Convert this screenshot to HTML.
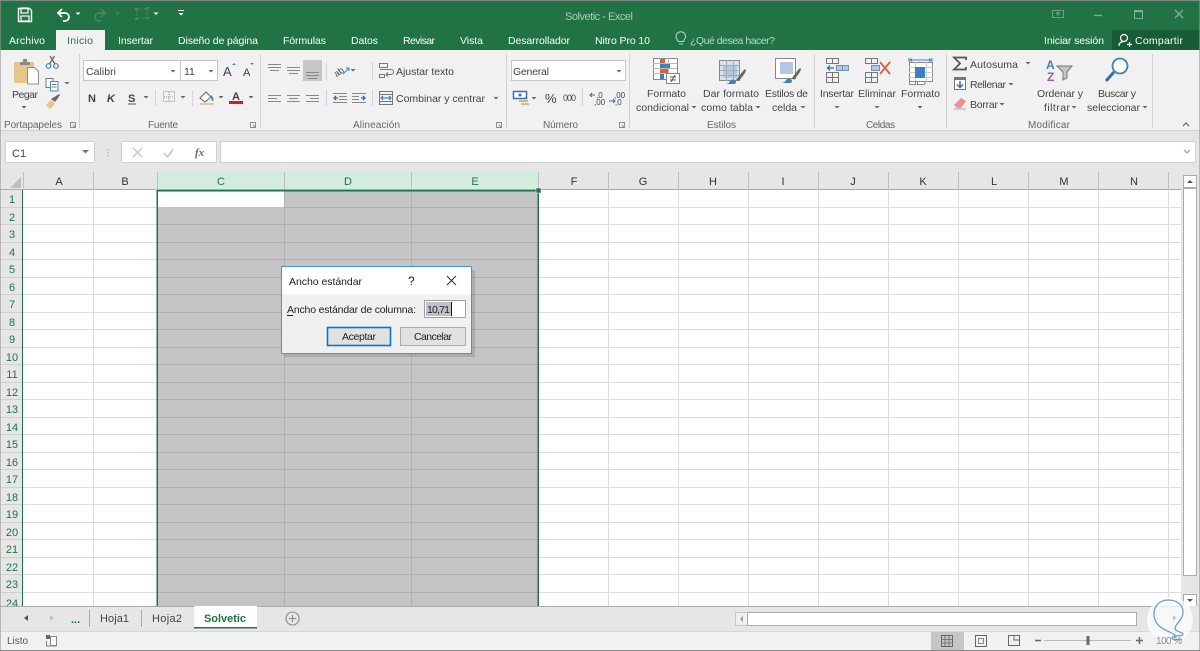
<!DOCTYPE html>
<html lang="es"><head><meta charset="utf-8"><title>Solvetic - Excel</title>
<style>
html,body{margin:0;padding:0;background:#e6e6e6;width:1200px;height:651px;overflow:hidden}
svg{display:block;filter:blur(.35px)}
text{font-family:"Liberation Sans",sans-serif;font-size:10.5px;fill:#444}
.t{fill:#fff;font-size:10.5px}
.g{fill:#666;font-size:10px}
.c{fill:#333;font-size:11px;text-anchor:middle}
.r{fill:#217346;font-size:11px;text-anchor:middle}
.ln{fill:none;stroke:#666;stroke-width:1}
</style></head><body>
<svg width="1200" height="651" viewBox="0 0 1200 651" xmlns="http://www.w3.org/2000/svg">
<defs>
<path id="ar" d="M-2.5 0h5l-2.5 2.5z" fill="#666"/>
<path id="aw" d="M-2.5 0h5l-2.5 2.5z" fill="#fff"/>
</defs>
<rect width="1200" height="651" fill="#e6e6e6"/>
<!-- title bar -->
<rect width="1200" height="50" fill="#217346"/>
<rect width="1200" height="1" fill="#7f8a84"/>
<path d="M18.5 8.5h11l2 2v11h-13z" fill="none" stroke="#fff" stroke-width="1.4"/><rect x="21" y="8" width="7" height="5" fill="none" stroke="#fff" stroke-width="1.2"/><rect x="21" y="16" width="8" height="5" fill="none" stroke="#fff" stroke-width="1.2"/>
<path d="M62 9l-4 4 4 4M58 13h7a4 4 0 0 1 0 8h-2" fill="none" stroke="#fff" stroke-width="1.7"/><use href="#aw" x="78" y="12.5"/>
<path d="M101 9l4 4-4 4M105 13h-6a4 4 0 0 0 0 8h2" fill="none" stroke="#46885f" stroke-width="1.7"/><path d="M115 12.5h5l-2.500 2.500z" fill="#46885f"/>
<rect x="137" y="9" width="10" height="9" fill="none" stroke="#46885f" stroke-width="1.2" stroke-dasharray="2 1.500"/><path d="M135 9h3M146 18h3M135 19h3M146 8h3" stroke="#46885f" stroke-width="2"/><use href="#aw" x="156" y="12.500"/>
<path d="M178 10.500h6" stroke="#fff"/><use href="#aw" x="181" y="13"/>
<text x="565" y="20" textLength="68" style="fill:#a8cbb8;font-size:11px">Solvetic - Excel</text>
<rect x="1052.500" y="10.500" width="11" height="7" fill="none" stroke="#6d9f85"/><path d="M1058 16v-4m-2 2l2-2 2 2" stroke="#6d9f85" fill="none"/>
<path d="M1094 15.500h8" stroke="#7fae96" stroke-width="1.300"/>
<rect x="1134.500" y="10.500" width="8" height="8" fill="none" stroke="#7fae96"/><path d="M1134 11.500h9" stroke="#7fae96" stroke-width="1.500"/>
<path d="M1175 10l8 8m0-8l-8 8" stroke="#7fae96" stroke-width="1.300"/>
<!-- tabs -->
<rect x="56" y="30" width="49" height="21" fill="#f1f1f1"/>
<text class="t" x="9" y="44" textLength="36">Archivo</text>
<text x="67" y="44" textLength="26" style="fill:#217346">Inicio</text>
<text class="t" x="118" y="44" textLength="35">Insertar</text>
<text class="t" x="178" y="44" textLength="80">Diseño de página</text>
<text class="t" x="283" y="44" textLength="43">Fórmulas</text>
<text class="t" x="351" y="44" textLength="27">Datos</text>
<text class="t" x="403" y="44" textLength="32">Revisar</text>
<text class="t" x="460" y="44" textLength="23">Vista</text>
<text class="t" x="508" y="44" textLength="62">Desarrollador</text>
<text class="t" x="595" y="44" textLength="55">Nitro Pro 10</text>
<path d="M679 44h4M678 41.500c0-2-2-2.500-2-5a4.800 4.800 0 0 1 9.600 0c0 2.500-2 3-2 5z" fill="none" stroke="#bcd6c8"/>
<text x="690" y="44" textLength="85" style="fill:#bcd6c8">¿Qué desea hacer?</text>
<text class="t" x="1044" y="44" textLength="60">Iniciar sesión</text>
<rect x="1112" y="30" width="88" height="20" fill="#185c37"/>
<circle cx="1124" cy="38" r="3.500" fill="none" stroke="#fff" stroke-width="1.200"/><path d="M1119 46c0-3 2-4.500 5-4.500M1127 44.500h5m-2.500-2.500v5" fill="none" stroke="#fff" stroke-width="1.200"/>
<text class="t" x="1135" y="44" textLength="48">Compartir</text>
<!-- ribbon -->
<rect y="50" width="1200" height="80" fill="#f1f1f1"/>
<rect y="130" width="1200" height="1" fill="#d2d2d2"/>
<path d="M79.500 54v74M260.500 54v74M506.500 54v74M629.500 54v74M814.500 54v74M946.500 54v74M1152.500 54v74" stroke="#d2d2d2"/>
<!-- portapapeles -->
<rect x="14" y="62" width="20" height="21" rx="1" fill="#e8c588"/><path d="M20 62h10v3H20zM23 59h4v3h-4z" fill="#8a8a8a"/>
<path d="M27.500 67.500h7l4 4v12.500h-11z" fill="#fff" stroke="#8f8f8f"/>
<text x="12" y="98" textLength="26">Pegar</text><use href="#ar" x="24" y="106"/>
<circle cx="48.500" cy="66" r="2.300" fill="none" stroke="#3f7fc0" stroke-width="1.200"/><circle cx="56" cy="66" r="2.300" fill="none" stroke="#3f7fc0" stroke-width="1.200"/><path d="M49.500 64l5-8M55 64l-5-8" stroke="#666" stroke-width="1.300"/>
<rect x="46" y="78.500" width="7" height="9" fill="#fff" stroke="#777"/><rect x="50.500" y="81.500" width="7.500" height="9.500" fill="#fff" stroke="#4a87c5"/><path d="M52 84.500h4.500M52 87h4.500" stroke="#777"/><use href="#ar" x="67" y="82"/>
<path d="M46 105l5-5 4 4-5 5z" fill="#e9c47c"/><path d="M51 99l5-3 3-2 1 1-2 3-3 4z" fill="#666"/>
<text class="g" x="4" y="128" textLength="58">Portapapeles</text>
<path d="M70.500 122.500h5v5h-5zM73 125l2.500 2.500" fill="none" stroke="#888" stroke-width=".9"/>
<!-- fuente -->
<rect x="83.500" y="60.500" width="97" height="20" fill="#fff" stroke="#c6c6c6"/><rect x="180.500" y="60.500" width="37" height="20" fill="#fff" stroke="#c6c6c6"/>
<text x="86" y="75" textLength="30">Calibri</text><use href="#ar" x="173" y="70"/>
<text x="184" y="75">11</text><use href="#ar" x="211" y="70"/>
<text x="223" y="76" textLength="9" style="font-size:13px">A</text><path d="M232 65l2-2 2 2z" fill="#3f7fc0"/>
<text x="243" y="76" textLength="8" style="font-size:11px">A</text><path d="M250 63h4l-2 2z" fill="#3f7fc0"/>
<text x="88" y="102" style="font-weight:bold;font-size:11px">N</text><text x="107" y="102" style="font-weight:bold;font-style:italic;font-size:11px">K</text><text x="128" y="102" style="font-weight:bold;font-size:11px">S</text><path d="M128 104h8" stroke="#555"/><use href="#ar" x="146" y="96"/>
<path d="M155.500 90v16" stroke="#d2d2d2"/>
<rect x="163.500" y="91.500" width="11" height="10" fill="none" stroke="#999" stroke-dasharray="1 1"/><path d="M169 92v10M164 97h11" stroke="#999" stroke-dasharray="1 1"/><use href="#ar" x="183" y="96"/>
<path d="M192.500 90v16" stroke="#d2d2d2"/>
<path d="M200 98l6-6 5 5-6 5z" fill="#fff" stroke="#666"/><path d="M211 95c2 2 3 4 2 6-2 0-2-3-2-6z" fill="#3f7fc0"/><rect x="200" y="103" width="14" height="2" fill="#e7c995"/><use href="#ar" x="221" y="96"/>
<text x="232" y="100" textLength="8" style="font-size:11px;font-weight:bold">A</text><rect x="229" y="101" width="14" height="3" fill="#e81123"/><use href="#ar" x="251" y="96"/>
<text class="g" x="148" y="128" textLength="30">Fuente</text>
<path d="M250.500 122.500h5v5h-5zM253 125l2.500 2.500" fill="none" stroke="#888" stroke-width=".9"/>
<!-- alineacion -->
<rect x="303" y="60" width="19" height="21" fill="#c6c6c6"/>
<path d="M268 64.500h13M268 67.500h13M270 70.500h9M287 67.500h13M287 70.500h13M289 73.500h9M306 72.500h13M306 75.500h13M308 78.500h9" stroke="#888" fill="none"/>
<path d="M268 95.500h13M268 98.500h9M268 101.500h13M287 95.500h13M289 98.500h9M287 101.500h13M306 95.500h13M310 98.500h9M306 101.500h13" stroke="#888"/>
<path d="M326.500 62v18M326.500 90v16M372.500 62v18M372.500 90v16" stroke="#d2d2d2"/>
<text x="333" y="74" style="font-size:9px" transform="rotate(-35 340 70)">ab</text><path d="M343 74l6-6m-3 0h3v3" stroke="#3f7fc0" fill="none"/><use href="#ar" x="353" y="69"/>
<path d="M333 93.500h14M339 96.500h8M339 99.500h8M333 102.500h14M352 93.500h14M352 96.500h7M352 99.500h7M352 102.500h14" stroke="#888"/><path d="M338 98h-4m2-2l-2 2 2 2M361 98h4m-2-2l2 2-2 2" stroke="#2b6fb5" stroke-width="1.300" fill="none"/>
<path d="M379.500 63.500h8v4h-8zM379.500 74.500h5v3h-5zM380 69.500h11a2 2 0 0 1 0 5h-4" fill="none" stroke="#777"/><path d="M386 74.500l2-2m-2 2l2 2" stroke="#2b6fb5"/>
<text x="396" y="75" textLength="58">Ajustar texto</text>
<rect x="379.500" y="91.500" width="13" height="13" fill="none" stroke="#777"/><path d="M382 98h8m-7-2l-2 2 2 2m6-4l2 2-2 2" stroke="#2b6fb5" fill="none"/><path d="M380 94.500h12M380 101.500h12" stroke="#777"/>
<text x="396" y="102" textLength="89">Combinar y centrar</text><use href="#ar" x="496" y="97"/>
<text class="g" x="353" y="128" textLength="47">Alineación</text>
<path d="M496.500 122.500h5v5h-5zM499 125l2.500 2.500" fill="none" stroke="#888" stroke-width=".9"/>
<!-- numero -->
<rect x="511.500" y="60.500" width="114" height="20" fill="#fff" stroke="#c6c6c6"/>
<text x="513" y="75" textLength="36">General</text><use href="#ar" x="619" y="70"/>
<rect x="513.500" y="91.500" width="13" height="7" fill="#fff" stroke="#2b6fb5" stroke-width="1.500"/><circle cx="520" cy="95" r="1.500" fill="#2b6fb5"/><path d="M519 100h9v2h-9zM521 103h8v2h-8z" fill="#e2b765"/><use href="#ar" x="534" y="97"/>
<text x="545" y="103" textLength="12" style="font-size:13px">%</text>
<text x="563" y="101" textLength="13" style="font-size:9px">000</text>
<path d="M582.500 88v18" stroke="#d2d2d2"/>
<text x="596" y="98" style="font-size:8px">,0</text><text x="594" y="105" style="font-size:8px">,00</text><path d="M595 95h-5m2-2l-2 2 2 2" stroke="#2b6fb5" fill="none"/>
<text x="614" y="98" style="font-size:8px">,00</text><text x="615" y="105" style="font-size:8px">,0</text><path d="M609 101h6m-2-2l2 2-2 2" stroke="#2b6fb5" fill="none"/>
<text class="g" x="543" y="128" textLength="35">Número</text>
<path d="M619.500 122.500h5v5h-5zM622 125l2.500 2.500" fill="none" stroke="#888" stroke-width=".9"/>
<!-- estilos -->
<rect x="653.500" y="58.500" width="24" height="21" fill="#fff" stroke="#888"/><path d="M653 63.500h24M653 68.500h24M653 73.500h24M660.500 58v21M668.500 58v21" stroke="#bbb"/>
<path d="M660 59h5v4h-5zM660 69h8v4h-8z" fill="#d9603b"/><path d="M660 64h10v4h-10zM660 74h4v5h-4z" fill="#3f7fbf"/>
<rect x="666.500" y="73.500" width="13" height="10" fill="#fff" stroke="#888"/><path d="M670 77h6M670 80h6M675 75l-4 7" stroke="#555" fill="none"/>
<text x="647" y="97" textLength="39">Formato</text><text x="636" y="111" textLength="53">condicional</text><use href="#ar" x="694" y="106"/>
<rect x="719.500" y="60.500" width="20" height="20" fill="#d6e2ef" stroke="#888"/><rect x="723" y="66" width="14" height="12" fill="#b4c9e1"/><path d="M720 65.500h20M720 70.500h20M720 75.500h20M726.500 60v21M733.500 60v21" stroke="#aaa"/>
<path d="M736 80l7-9 2-2 1 1-1 3-6 8z" fill="#666"/><path d="M725 84c3 0 4-1 6-4 2-1 5 0 5 2 0 1-1 2-2 2z" fill="#3f7fbf"/>
<text x="703" y="97" textLength="56">Dar formato</text><text x="701" y="111" textLength="52">como tabla</text><use href="#ar" x="758" y="106"/>
<rect x="775.500" y="58.500" width="20" height="20" fill="#fff" stroke="#888"/><rect x="780" y="62" width="13" height="12" fill="#b4c9e1"/>
<path d="M792 78l6-8 2-2 1 1-1 3-6 8z" fill="#666"/><path d="M781 83c3 0 4-1 6-4 2-1 5 0 5 2 0 1-1 2-2 2z" fill="#3f7fbf"/>
<text x="765" y="97" textLength="43">Estilos de</text><text x="772" y="111" textLength="25">celda</text><use href="#ar" x="803" y="106"/>
<text class="g" x="707" y="128" textLength="29">Estilos</text>
<!-- celdas -->
<path d="M826.500 58.500h12v5h-12zM832.500 58v5M826.500 72.500h12v10h-12zM826.500 77.500h12M832.500 72v11" fill="none" stroke="#777"/>
<rect x="836.500" y="65.500" width="12" height="5" fill="#b4c9e1" stroke="#6f93b8"/><path d="M842.500 65v6" stroke="#6f93b8"/><path d="M834 68h-6m2-2.500l-2.500 2.500 2.500 2.500" fill="none" stroke="#2b6fb5" stroke-width="1.300"/>
<text x="820" y="97" textLength="34">Insertar</text><use href="#ar" x="837" y="106"/>
<path d="M865.500 58.500h12v5h-12zM871.500 58v5M865.500 72.500h12v10h-12zM865.500 77.500h12M871.500 72v11" fill="none" stroke="#777"/>
<rect x="871.500" y="65.500" width="8" height="5" fill="#b4c9e1" stroke="#6f93b8"/><path d="M880 62l10 12m0-12l-10 12" stroke="#d9603b" stroke-width="1.800"/>
<text x="858" y="97" textLength="38">Eliminar</text><use href="#ar" x="877" y="106"/>
<path d="M909 58v4M932 58v4M910 60h21m-19-1.500l-2 1.500 2 1.500m17-3l2 1.500-2 1.500" stroke="#3f7fbf" fill="none"/>
<rect x="909.500" y="62.500" width="23" height="19" fill="#fff" stroke="#888"/><path d="M909 67.500h24M909 72.500h24M909 77.500h24M915.500 62v20M926.500 62v20" stroke="#ccc"/><rect x="915" y="67" width="10" height="11" fill="#3f7fbf"/>
<path d="M909.500 81.500h6v3h-6zM917.500 81.500h8l-1 3h-7z" fill="#fff" stroke="#888"/>
<text x="901" y="97" textLength="39">Formato</text><use href="#ar" x="920" y="106"/>
<text class="g" x="866" y="128" textLength="29">Celdas</text>
<!-- modificar -->
<path d="M966 60v-2.500h-12l6 6-6 6h12V67" fill="none" stroke="#555" stroke-width="1.700"/>
<text x="970" y="68" textLength="48">Autosuma</text><use href="#ar" x="1028" y="62"/>
<rect x="954.500" y="77.500" width="11" height="12" fill="#fff" stroke="#777"/><path d="M954 79h12" stroke="#777" stroke-width="2"/><path d="M960 81v6m-3-2.500l3 3 3-3" stroke="#2b6fb5" stroke-width="1.500" fill="none"/>
<text x="970" y="88" textLength="36">Rellenar</text><use href="#ar" x="1011" y="83"/>
<path d="M954 105l7-7 5 3-5 7h-4z" fill="#ec8f97"/><path d="M954 109h12" stroke="#aaa"/>
<text x="970" y="108" textLength="28">Borrar</text><use href="#ar" x="1002" y="103"/>
<text x="1046" y="69" style="font-size:12px;font-weight:bold;fill:#3f7fbf">A</text><text x="1047" y="81" style="font-size:12px;font-weight:bold;fill:#9b59b6">Z</text>
<path d="M1057 66h15l-5 6v6l-4 2v-8z" fill="#c6c6c6" stroke="#777"/>
<text x="1037" y="97" textLength="46">Ordenar y</text><text x="1044" y="111" textLength="26">filtrar</text><use href="#ar" x="1074" y="106"/>
<circle cx="1120" cy="66" r="7.500" fill="#fff" stroke="#3f7fbf" stroke-width="1.800"/><path d="M1114 72l-8 9" stroke="#3a6ea5" stroke-width="3"/>
<text x="1098" y="97" textLength="38">Buscar y</text><text x="1087" y="111" textLength="53">seleccionar</text><use href="#ar" x="1145" y="106"/>
<text class="g" x="1028" y="128" textLength="42">Modificar</text>
<path d="M1183 126l3-3 3 3" fill="none" stroke="#666" stroke-width="1.200"/>
<!-- formula bar -->
<rect x="5.500" y="141.500" width="89" height="21" fill="#fff" stroke="#d0d0d0"/>
<text x="12" y="157" style="font-size:11px">C1</text><path d="M82 150h7l-3.500 3.500z" fill="#777"/>
<path d="M108 149v1.500M108 152v1.500M108 155v1.500" stroke="#aaa"/>
<rect x="121.500" y="141.500" width="95" height="21" fill="#fff" stroke="#d0d0d0"/>
<path d="M133 148l9 9m0-9l-9 9" stroke="#c6c6c6" stroke-width="1.300"/><path d="M164 153l3.500 4 6-8" fill="none" stroke="#c6c6c6" stroke-width="1.600"/>
<text x="195" y="156" style="font-family:'Liberation Serif',serif;font-style:italic;font-weight:bold;font-size:11px;fill:#666">fx</text>
<rect x="220.500" y="141.500" width="975" height="21" fill="#fff" stroke="#d0d0d0"/>
<path d="M1184 150l3 3 3-3" fill="none" stroke="#aaa" stroke-width="1.300"/>
<!-- headers -->
<rect x="157" y="172" width="381" height="17" fill="#d2ecdd"/>
<rect y="189" width="1181" height="1" fill="#ababab"/>
<path d="M21 177v11H10z" fill="#bdbdbd"/>
<path d="M23.500 172v18M93.500 172v18M157.500 172v18M284.500 172v18M411.500 172v18M538.500 172v18M608.500 172v18M678.500 172v18M748.500 172v18M818.500 172v18M888.500 172v18M958.500 172v18M1028.500 172v18M1098.500 172v18M1168.500 172v18" stroke="#bdbdbd"/>
<text class="c" x="59" y="185">A</text><text class="c" x="125" y="185">B</text>
<text class="c" x="221" y="185" style="fill:#217346">C</text><text class="c" x="348" y="185" style="fill:#217346">D</text><text class="c" x="475" y="185" style="fill:#217346">E</text>
<text class="c" x="574" y="185">F</text><text class="c" x="643" y="185">G</text><text class="c" x="713" y="185">H</text><text class="c" x="783" y="185">I</text><text class="c" x="853" y="185">J</text><text class="c" x="923" y="185">K</text><text class="c" x="994" y="185">L</text><text class="c" x="1064" y="185">M</text><text class="c" x="1134" y="185">N</text>
<!-- sheet -->
<rect x="23" y="190" width="1158" height="416" fill="#fff"/>
<path d="M23 207.500H1181M23 224.500H1181M23 242.500H1181M23 259.500H1181M23 277.500H1181M23 294.500H1181M23 312.500H1181M23 329.500H1181M23 347.500H1181M23 364.500H1181M23 382.500H1181M23 399.500H1181M23 417.500H1181M23 434.500H1181M23 452.500H1181M23 469.500H1181M23 487.500H1181M23 504.500H1181M23 522.500H1181M23 539.500H1181M23 557.500H1181M23 574.500H1181M23 592.500H1181" stroke="#dcdcdc"/>
<path d="M93.500 190v416M608.500 190v416M678.500 190v416M748.500 190v416M818.500 190v416M888.500 190v416M958.500 190v416M1028.500 190v416M1098.500 190v416M1168.500 190v416" stroke="#dcdcdc"/>
<rect x="158" y="191" width="380" height="415" fill="#c4c4c4"/>
<rect x="158" y="191" width="126" height="16" fill="#fff"/>
<path d="M158 224.500H538M158 242.500H538M158 259.500H538M158 277.500H538M158 294.500H538M158 312.500H538M158 329.500H538M158 347.500H538M158 364.500H538M158 382.500H538M158 399.500H538M158 417.500H538M158 434.500H538M158 452.500H538M158 469.500H538M158 487.500H538M158 504.500H538M158 522.500H538M158 539.500H538M158 557.500H538M158 574.500H538M158 592.500H538M284 207.500H538" stroke="#b0b0b0"/>
<path d="M284.500 191v415M411.500 191v415" stroke="#b0b0b0"/>
<rect x="156.500" y="190" width="382" height="1.500" fill="#217346"/>
<rect x="156.500" y="190" width="1.500" height="416" fill="#217346"/>
<rect x="537.500" y="190" width="1.500" height="416" fill="#217346"/>
<rect x="536" y="188" width="5" height="5" fill="#217346" stroke="#fff" stroke-width=".5"/>
<rect x="22" y="190" width="1" height="416" fill="#217346"/>
<!-- row numbers -->
<g transform="translate(0,.8)">
<text class="r" x="12" y="202">1</text><text class="r" x="12" y="220">2</text><text class="r" x="12" y="237">3</text><text class="r" x="12" y="255">4</text><text class="r" x="12" y="272">5</text><text class="r" x="12" y="290">6</text><text class="r" x="12" y="307">7</text><text class="r" x="12" y="325">8</text><text class="r" x="12" y="342">9</text><text class="r" x="12" y="360">10</text><text class="r" x="12" y="377">11</text><text class="r" x="12" y="395">12</text><text class="r" x="12" y="412">13</text><text class="r" x="12" y="430">14</text><text class="r" x="12" y="447">15</text><text class="r" x="12" y="465">16</text><text class="r" x="12" y="482">17</text><text class="r" x="12" y="500">18</text><text class="r" x="12" y="517">19</text><text class="r" x="12" y="535">20</text><text class="r" x="12" y="552">21</text><text class="r" x="12" y="570">22</text><text class="r" x="12" y="587">23</text><text class="r" x="12" y="606">24</text>
</g>
<path d="M0 207.500h22M0 224.500h22M0 242.500h22M0 259.500h22M0 277.500h22M0 294.500h22M0 312.500h22M0 329.500h22M0 347.500h22M0 364.500h22M0 382.500h22M0 399.500h22M0 417.500h22M0 434.500h22M0 452.500h22M0 469.500h22M0 487.500h22M0 504.500h22M0 522.500h22M0 539.500h22M0 557.500h22M0 574.500h22M0 592.500h22" stroke="#cfcfcf"/>
<!-- v scrollbar -->
<rect x="1181" y="172" width="19" height="434" fill="#e6e6e6"/>
<rect x="1183.500" y="175.500" width="13" height="12" fill="#fff" stroke="#ababab"/><path d="M1187 183h6l-3-3z" fill="#555"/>
<rect x="1183.500" y="188.500" width="13" height="387" fill="#fff" stroke="#ababab"/>
<rect x="1183.500" y="594.500" width="13" height="12" fill="#fff" stroke="#ababab"/><path d="M1187 599h6l-3 3z" fill="#555"/>
<!-- sheet tabs -->
<rect y="606" width="1200" height="25" fill="#e6e6e6"/>
<rect y="606" width="1181" height="1" fill="#ababab"/>
<path d="M28 615v6l-4-3z" fill="#217346"/><path d="M50 615v6l4-3z" fill="#c0c0c0"/>
<text x="71" y="623" style="font-weight:bold;font-size:11px;fill:#217346">...</text>
<path d="M89.500 610v17M141.500 610v17" stroke="#aaa"/>
<text x="100" y="622" textLength="29" style="font-size:11px">Hoja1</text>
<text x="152" y="622" textLength="30" style="font-size:11px">Hoja2</text>
<rect x="194" y="606" width="63" height="21" fill="#fff"/><rect x="194" y="627" width="63" height="1.500" fill="#217346"/>
<text x="204" y="622" textLength="42" style="font-size:11px;font-weight:bold;fill:#217346">Solvetic</text>
<circle cx="292.500" cy="618.500" r="6.500" fill="none" stroke="#8a8a8a" stroke-width="1.100"/><path d="M289 618.500h7M292.500 615v7" stroke="#8a8a8a" stroke-width="1.100"/>
<rect x="735.500" y="612.500" width="12" height="13" fill="#efefef" stroke="#c6c6c6"/><path d="M743 616v6l-3-3z" fill="#999"/>
<rect x="747.500" y="612.500" width="389" height="13" fill="#fff" stroke="#ababab"/>
<!-- status bar -->
<rect y="631" width="1200" height="20" fill="#f1f1f1"/>
<rect y="631" width="1200" height="1" fill="#d8d8d8"/>
<rect y="650" width="1200" height="1" fill="#8a8a8a"/>
<text x="7" y="644" textLength="21" style="font-size:10px;fill:#555">Listo</text>
<rect x="50.500" y="636.500" width="6" height="9" fill="#fff" stroke="#888"/><rect x="46" y="635" width="4" height="4" fill="#666"/><path d="M46.500 641v5h10" fill="none" stroke="#888"/>
<rect x="931" y="632" width="33" height="18" fill="#c6c6c6"/>
<rect x="941.500" y="635.500" width="11" height="11" fill="none" stroke="#666"/><path d="M945 635v11M949 635v11M941 639.500h11M941 643h11" stroke="#666" stroke-width=".8"/>
<rect x="975.500" y="635.500" width="11" height="11" fill="none" stroke="#666"/><rect x="978.500" y="638.500" width="5" height="5" fill="none" stroke="#888"/>
<rect x="1008.500" y="635.500" width="11" height="10" fill="none" stroke="#666"/><path d="M1014 635v5h5" fill="none" stroke="#666"/>
<path d="M1035 640.500h6M1136 640.500h7M1139.500 637v7" stroke="#666" stroke-width="1.500"/>
<path d="M1044 640.500h87" stroke="#bbb"/><rect x="1086.500" y="636" width="3" height="9" fill="#666"/>
<!-- dialog -->
<rect x="284" y="270" width="191" height="87" fill="#000" opacity=".12"/>
<rect x="282" y="267" width="190" height="86" fill="#f0f0f0"/>
<rect x="282.500" y="267.500" width="189" height="27" fill="#fff"/>
<rect x="281.500" y="266.500" width="190" height="87" fill="none" stroke="#4a94d6"/>
<text x="289" y="285" textLength="73" style="fill:#222;font-size:10.500px">Ancho estándar</text>
<text x="408" y="285" style="fill:#222;font-size:12px">?</text>
<path d="M447 276l9 9m0-9l-9 9" stroke="#333" stroke-width="1.100"/>
<text x="287" y="313" textLength="129" style="fill:#222;font-size:10.500px">Ancho estándar de columna:</text><path d="M287 315.500h6" stroke="#222"/>
<rect x="424.500" y="300.500" width="41" height="17" fill="#fff" stroke="#a0a0a0"/>
<rect x="426" y="302" width="25" height="14" fill="#bfc2ca"/>
<text x="427" y="313" textLength="23" style="fill:#222;font-size:10.500px">10,71</text><path d="M451.500 302v14" stroke="#111"/>
<rect x="327.500" y="327.500" width="63" height="18" fill="#e1e1e1" stroke="#0078d7" stroke-width="1.600"/>
<text x="342" y="340" textLength="34" style="fill:#222;font-size:10.500px">Aceptar</text>
<rect x="400.500" y="327.500" width="65" height="18" fill="#e1e1e1" stroke="#adadad"/>
<text x="414" y="340" textLength="38" style="fill:#222;font-size:10.500px">Cancelar</text>
<!-- watermark -->
<circle cx="1170" cy="620" r="23" fill="#fff" opacity=".72"/>
<path d="M1176 636C1170 630 1156 630 1154 616C1153 606 1160 600 1168 600C1177 600 1183 605 1183 612C1183 620 1176 623 1175 628C1175 632 1183 632 1183 634C1183 637 1172 635 1172 638C1172 640 1178 640 1182 639" fill="none" stroke="#6f9fd0" stroke-width="1.300"/>
<path d="M1173 615v6l3-3z" fill="#c0c0c0"/>
<text x="1156" y="644" textLength="26" style="font-size:10px;fill:#888">100 %</text>
<rect x="0" y="0" width="1" height="651" fill="#9a9a9a" opacity=".6"/>
<rect x="1199" y="0" width="1" height="651" fill="#9a9a9a" opacity=".6"/>
</svg>
</body></html>
